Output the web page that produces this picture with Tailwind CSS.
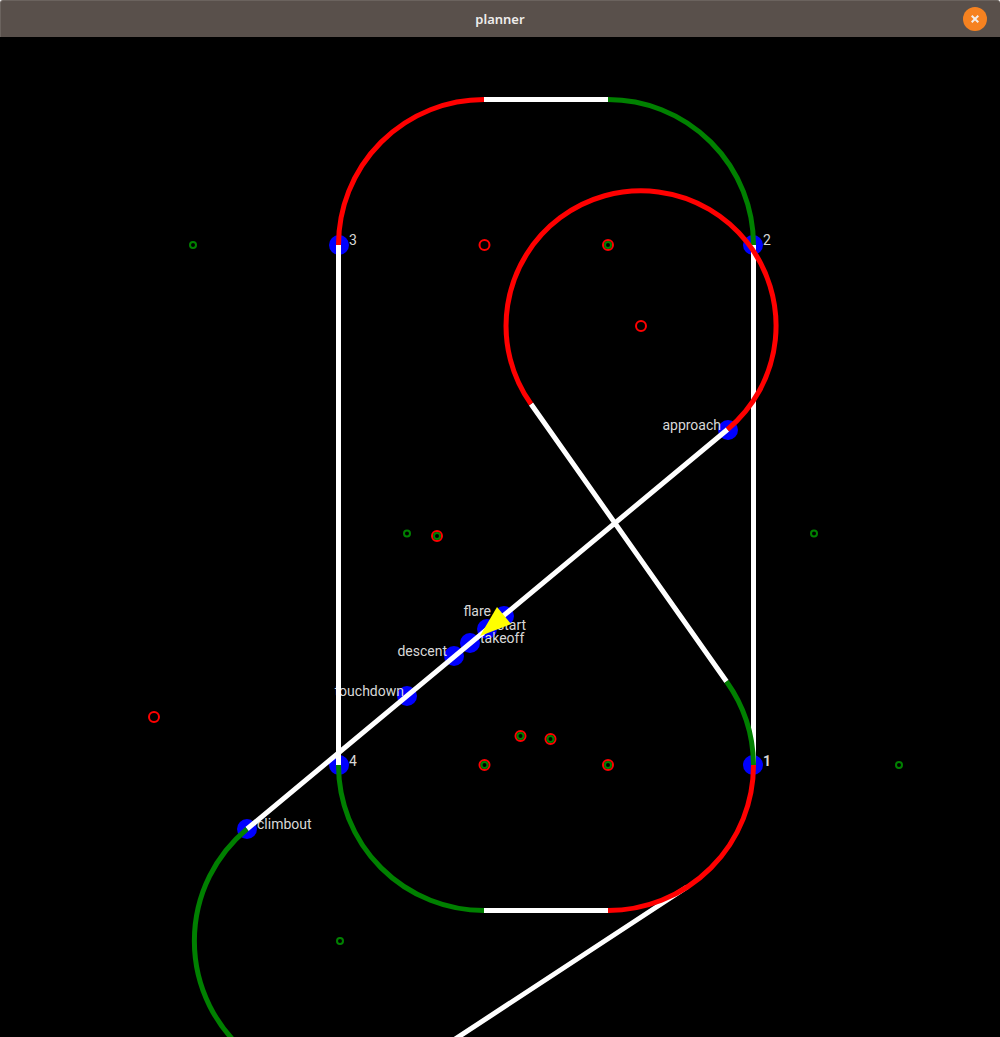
<!DOCTYPE html>
<html lang="en">
<head>
<meta charset="utf-8">
<title>planner</title>
<script src="https://cdn.jsdelivr.net/npm/@tailwindcss/browser@4"></script>
</head>
<body class="bg-black">
<div class="flex min-h-screen flex-col bg-white">
  <header class="grid h-[37px] grid-cols-[1fr_auto_1fr] items-center rounded-t-[3px] border-t border-l border-[#6b635e] bg-[#59504b] pr-[13px] pb-px">
    <h1 class="col-start-2 pl-3 font-['Noto_Sans',sans-serif] text-[13px] leading-5 font-semibold text-[#efedec]">planner</h1>
    <button type="button" aria-label="Close" class="flex size-6 items-center justify-center justify-self-end rounded-full bg-[#f68220]">
      <svg class="size-2" viewBox="0 0 8 8" fill="none" stroke="#f3ede8" stroke-width="2" aria-hidden="true"><path d="M.7.7 7.3 7.3M7.3.7.7 7.3"/></svg>
    </button>
  </header>
  <main class="flex-1 overflow-hidden bg-black">
    <svg class="block w-full" viewBox="0 37 1000 1000" role="img" aria-label="Flight plan">
      <!-- waypoints -->
      <g fill="#00f">
        <circle cx="753" cy="765" r="10"/>
        <circle cx="753" cy="245" r="10"/>
        <circle cx="339" cy="245" r="10"/>
        <circle cx="339" cy="765" r="10"/>
        <circle cx="728" cy="430" r="10"/>
        <circle cx="504" cy="616" r="10"/>
        <circle cx="487" cy="629" r="10"/>
        <circle cx="470" cy="643" r="10"/>
        <circle cx="454" cy="656" r="10"/>
        <circle cx="407" cy="696" r="10"/>
        <circle cx="247" cy="829" r="10"/>
      </g>
      <!-- waypoint labels -->
      <g class="font-[Roboto,sans-serif] text-[14px]" fill="#d8d8d8">
        <text class="font-bold" x="763" y="766">1</text>
        <text x="763" y="245">2</text>
        <text x="349" y="245">3</text>
        <text x="349" y="766">4</text>
        <text x="721" y="430" text-anchor="end">approach</text>
        <text x="491" y="616" text-anchor="end">flare</text>
        <text x="497" y="630">start</text>
        <text x="480" y="643">takeoff</text>
        <text x="447" y="656" text-anchor="end">descent</text>
        <text x="404" y="696" text-anchor="end">touchdown</text>
        <text x="257" y="829">climbout</text>
      </g>
      <!-- turn centres -->
      <g fill="none" stroke="red" stroke-width="2">
        <circle cx="484.5" cy="245" r="5"/>
        <circle cx="608" cy="245" r="5"/>
        <circle cx="641" cy="326" r="5"/>
        <circle cx="437" cy="536" r="5"/>
        <circle cx="154" cy="717" r="5"/>
        <circle cx="520.5" cy="736" r="5"/>
        <circle cx="550.5" cy="739" r="5"/>
        <circle cx="484.5" cy="765" r="5"/>
        <circle cx="608" cy="765" r="5"/>
      </g>
      <g fill="none" stroke="green" stroke-width="2">
        <circle cx="193" cy="245" r="3"/>
        <circle cx="608" cy="245" r="3"/>
        <circle cx="407" cy="533.5" r="3"/>
        <circle cx="437" cy="536" r="3"/>
        <circle cx="814" cy="533.5" r="3"/>
        <circle cx="520.5" cy="736" r="3"/>
        <circle cx="550.5" cy="739" r="3"/>
        <circle cx="484.5" cy="765" r="3"/>
        <circle cx="608" cy="765" r="3"/>
        <circle cx="899" cy="765" r="3"/>
        <circle cx="340" cy="941" r="3"/>
      </g>
      <!-- straight legs -->
      <g fill="none" stroke="#fff" stroke-width="5">
        <path d="M753.500 765V245M608 99.500H484M338.500 245V765M484 910.500H608"/>
        <path d="M727.500 429.500 247 829M531 404 726.500 681.500M687 887 443 1047"/>
      </g>
      <!-- turns -->
      <g fill="none" stroke-width="5">
        <path stroke="green" d="M753.500 245A145.500 145.500 0 0 0 608 99.500"/>
        <path stroke="red" d="M484 99.500A145.500 145.500 0 0 0 338.500 245"/>
        <path stroke="green" d="M338.500 765A145.500 145.500 0 0 0 484 910.500"/>
        <path stroke="green" d="M753.500 765A145.500 145.500 0 0 0 726.500 681.500"/>
        <path stroke="red" d="M608 910.500A145.500 145.500 0 0 0 753.500 765"/>
        <path stroke="red" d="M727.500 429.500A135 135 0 1 0 531 404"/>
        <path stroke="green" d="M247 829A145.500 145.500 0 0 0 247 1053"/>
      </g>
      <!-- aircraft -->
      <path fill="#ff0" d="M480 636 497 607 511 624Z"/>
    </svg>
  </main>
</div>
</body>
</html>
